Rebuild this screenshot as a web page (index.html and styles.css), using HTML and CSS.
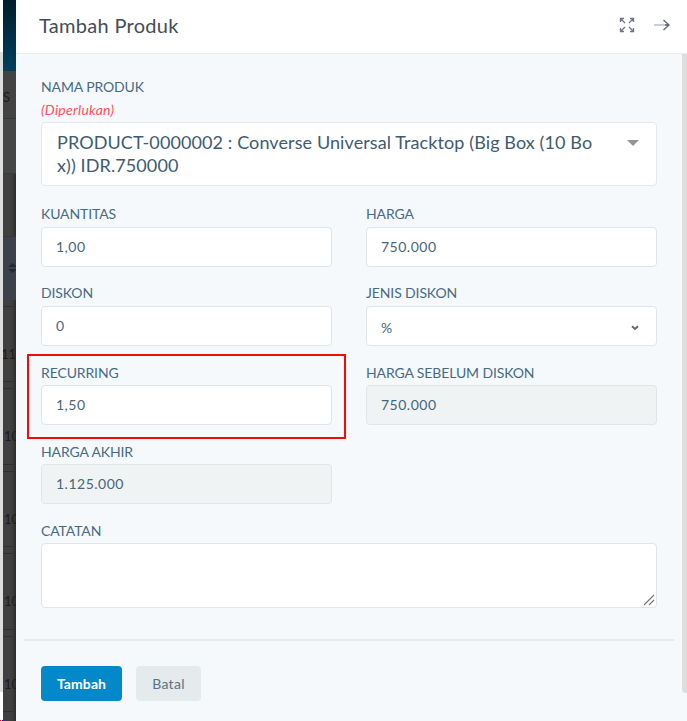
FILE: index.html
```html
<!DOCTYPE html>
<html lang="id">
<head>
<meta charset="utf-8">
<title>Tambah Produk</title>
<link rel="stylesheet" href="styles.css">
</head>
<body>
<div class="app">
  <div class="edge"><div class="edge-track"></div><div class="edge-mark"></div></div>
  <div class="backdrop">
    <div class="bd-nav"></div>
    <div class="bd-head">S</div>
    <div class="bd-filter"></div>
    <div class="bd-space"></div>
    <div class="bd-sort"><svg width="9" height="10" viewBox="0 0 9 10"><path d="M4.5 0 9 4H0zM4.5 10 0 6h9z" fill="#202735"/></svg></div>
    <div class="bd-row bd-first">11</div>
    <div class="bd-row">10</div>
    <div class="bd-row">10</div>
    <div class="bd-row">10</div>
    <div class="bd-row">10</div>
  </div>
  <main class="drawer">
    <header class="header">
      <h1 class="title">Tambah Produk</h1>
      <div class="actions">
        <svg width="16" height="16" viewBox="0 0 16 16" fill="none" stroke="#707581" stroke-width="1.3"><path d="M1.500 5V1.500H5M1.500 1.500 6 6M11 1.500h3.500V5M14.500 1.500 10 6M1.500 11v3.500H5M1.500 14.500 6 10M11 14.500h3.500V11M14.500 14.500 10 10"/></svg>
        <svg width="18" height="14" viewBox="0 0 18 14" fill="none"><path d="M1 7h14" stroke="#b9bcc5" stroke-width="1.500"/><path d="M10.500 2 16 7l-5.500 5M12 7h4" stroke="#606675" stroke-width="1.300"/></svg>
      </div>
    </header>
    <div class="body">
      <form class="form">
        <div class="field wide">
          <label class="label name">NAMA PRODUK</label>
          <span class="required">(Diperlukan)</span>
          <div class="product"><span>PRODUCT-0000002 : Converse Universal Tracktop (Big Box (10 Bo<br>x)) IDR.750000</span><i class="caret"></i></div>
        </div>
        <div class="field"><label class="label high">KUANTITAS</label><div class="input">1,00</div></div>
        <div class="field"><label class="label high">HARGA</label><div class="input">750.000</div></div>
        <div class="field"><label class="label high">DISKON</label><div class="input">0</div></div>
        <div class="field"><label class="label high">JENIS DISKON</label><div class="input select"><span>%</span><svg width="8" height="6" viewBox="0 0 8 6"><path d="M1 1.300 4 4l3-2.700" fill="none" stroke="#666" stroke-width="2"/></svg></div></div>
        <div class="field marked"><label class="label">RECURRING</label><div class="input">1,50</div></div>
        <div class="field"><label class="label">HARGA SEBELUM DISKON</label><div class="input off">750.000</div></div>
        <div class="field"><label class="label">HARGA AKHIR</label><div class="input off">1.125.000</div></div>
        <div class="field wide"><label class="label">CATATAN</label><div class="area"><svg width="12" height="12" viewBox="0 0 12 12"><path d="M1 11 11 1M6 11l5-5" stroke="#777" stroke-width="1.200"/></svg></div></div>
      </form>
      <footer class="footer"><button class="btn primary">Tambah</button><button class="btn">Batal</button></footer>
    </div>
    <div class="scroll"></div>
  </main>
</div>
</body>
</html>
```
FILE: styles.css
```css
* { box-sizing: border-box; }
body { margin: 0; font-family: Lato, "Liberation Sans", sans-serif; color: #486579; background: #fff; }
.app { display: grid; grid-template-columns: 3px 13px 671px; height: 721px; overflow: hidden; }
.edge { padding-top: 52px; }
.edge-track { height: 640px; background: #dedede; }
.edge-mark { height: 1px; margin-top: 28px; background: linear-gradient(90deg, #f00 33%, #ff0 33% 66%, #00f 66%); }
.backdrop { background: #404040; overflow: hidden; font-size: 13px; color: #1d1d1d; box-shadow: inset -4px 0 4px -3px #222; }
.bd-nav { height: 71px; background: linear-gradient(#001e2b, #00405f); }
.bd-head { height: 48px; line-height: 52px; background: #434343; border-bottom: 1px solid #383838; }
.bd-filter { height: 55px; background: #444746; border-bottom: 1px solid #393c3b; }
.bd-space { height: 63px; border-bottom: 1px solid #343741; }
.bd-sort { height: 63px; padding: 23px 0 0 5px; background: #3c414c; }
.bd-row { height: 76.500px; margin-top: 6px; line-height: 95px; padding-left: 1px; border: solid #303030; border-width: 1px 0; white-space: nowrap; }
.bd-first { padding-left: 0; text-indent: -2px; height: 76px; }
.drawer { display: grid; grid-template: 54px 1fr / 1fr 5px; background: #f5f9fc; }
.header { grid-column: 1 / 3; display: flex; justify-content: space-between; align-items: center; padding: 0 16px 3px 23px; background: #fff; border-bottom: 1px solid #e9edf0; }
.title { margin: 0; font-size: 20px; font-weight: 400; line-height: 24px; color: #444c55; letter-spacing: .3px; }
.actions { display: flex; align-items: center; gap: 18px; }
.actions svg { display: block; }
.body { min-width: 0; }
.form { display: grid; grid-template-columns: 291px 291px; column-gap: 34px; padding: 22px 0 0 25px; }
.field { height: 79px; }
.wide { grid-column: 1 / 3; height: auto; }
.field.wide:first-child { height: 126px; }
.label { display: block; height: 25px; padding-top: 4px; line-height: 17px; font-size: 14px; letter-spacing: -.12px; color: #486b83; white-space: nowrap; }
.label.high { padding-top: 3px; }
.label.name { height: 23px; padding-top: 2px; }
.required { display: block; height: 23px; line-height: 22px; font-size: 14px; letter-spacing: .25px; font-style: italic; color: #ff5059; }
.product { display: flex; justify-content: space-between; width: 616px; height: 64px; padding: 8px 17px 0 15px; background: #fff; border: 1px solid #e4e8eb; border-radius: 4px; font-size: 18px; letter-spacing: .1px; line-height: 22.500px; color: #3f5b70; white-space: nowrap; }
.caret { margin-top: 9px; width: 0; height: 0; border: 6px solid transparent; border-top-color: #949494; border-bottom: 0; }
.input { height: 40px; padding: 0 14px; border: 1px solid #e0e5e8; border-radius: 4px; background: #fff; line-height: 38px; font-size: 14px; letter-spacing: .5px; }
.off { background: #eff3f4; }
.select { display: flex; align-items: center; justify-content: space-between; padding: 3px 17px 0 14px; }
.marked { position: relative; }
.marked::after { content: ""; box-sizing: border-box; position: absolute; left: -14px; top: -6px; width: 319px; height: 85px; border: 2px solid #f30b0b; }
.area { display: flex; justify-content: flex-end; align-items: flex-end; width: 616px; height: 65px; padding: 1px; border: 1px solid #e0e5e8; border-radius: 4px; background: #fff; }
.footer { display: flex; gap: 14px; margin: 31px 8px 0; padding: 25px 0 0 17px; border-top: 2px solid #e5eaed; }
.btn { width: 65px; height: 35px; padding: 0 0 1px; border: 0; border-radius: 4px; background: #e5eaed; color: #5b7183; font: 14px Lato, sans-serif; letter-spacing: .3px; }
.primary { width: 81px; background: #0388ca; color: #fff; font-weight: 700; letter-spacing: .1px; }
.scroll { height: 639px; width: 5px; background: #dedede; border-radius: 0 0 0 4px; }
```
